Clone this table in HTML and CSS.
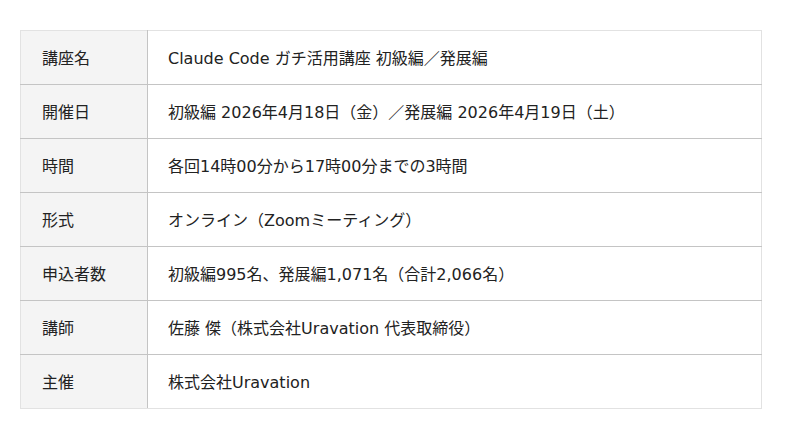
FILE: index.html
```html
<!DOCTYPE html>
<html lang="ja">
<head>
<meta charset="utf-8">
<link rel="stylesheet" href="styles.css">
</head>
<body>
<div class="wrap">
<table class="info">
<tr><th>講座名</th><td>Claude Code ガチ活用講座 初級編／発展編</td></tr>
<tr><th>開催日</th><td>初級編 2026年4月18日（金）／発展編 2026年4月19日（土）</td></tr>
<tr><th>時間</th><td>各回14時00分から17時00分までの3時間</td></tr>
<tr><th>形式</th><td>オンライン（Zoomミーティング）</td></tr>
<tr><th>申込者数</th><td>初級編995名、発展編1,071名（合計2,066名）</td></tr>
<tr><th>講師</th><td>佐藤 傑（株式会社Uravation 代表取締役）</td></tr>
<tr><th>主催</th><td>株式会社Uravation</td></tr>
</table>
</div>
</body>
</html>
```
FILE: styles.css
```css
html, body { margin: 0; padding: 0; background: #fff; }
body { font-family: "DejaVu Sans", "Noto Sans CJK JP", sans-serif; font-size: 16px; color: #222; }
.wrap { padding: 30px 0 0 20px; }
.info { width: 742px; border-collapse: collapse; border: 1px solid #e2e2e2; }
.info tr { height: 54px; }
.info th, .info td { text-align: left; font-weight: normal; padding: 0 0 2px 20px; vertical-align: middle; border-bottom: 1px solid #c4c4c4; }
.info tr:last-child th, .info tr:last-child td { border-bottom: 1px solid #e2e2e2; }
.info th { width: 105px; background: #f4f4f4; padding-left: 21px; border-right: 1px solid #c4c4c4; }
```
